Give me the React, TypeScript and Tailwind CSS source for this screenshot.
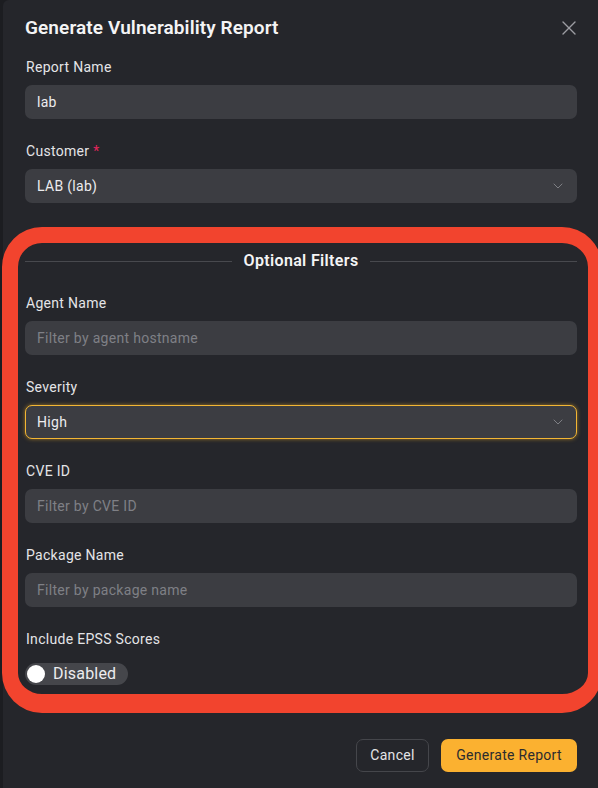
import { ChevronDown, X } from 'lucide-react';

const font = "font-['Roboto','Liberation_Sans',sans-serif]";

function Label({ text, required }: { text: string; required?: boolean }) {
  return (
    <div className="h-5 pl-[1px] text-[14px] leading-5 tracking-[0.3px] text-[#e4e4e7]">
      {text}
      {required && <span className="ml-1 text-[#e2255c]">*</span>}
    </div>
  );
}

function TextInput({ value, placeholder }: { value?: string; placeholder?: string }) {
  return (
    <div className="mt-2 flex h-[34px] items-center rounded-[7px] bg-[#3c3d42] px-3 text-[14px] tracking-[0.3px]">
      {value ? (
        <span className="text-[#ececef]">{value}</span>
      ) : (
        <span className="text-[#7f8086]">{placeholder}</span>
      )}
    </div>
  );
}

function Select({ value, focused }: { value: string; focused?: boolean }) {
  return (
    <div
      className={
        focused
          ? 'mt-2 flex h-[34px] items-center justify-between rounded-[7px] border border-[#f2b634] bg-[#3c3d42] pl-[11px] pr-[10px] text-[14px] tracking-[0.3px] shadow-[0_0_4px_rgba(250,180,40,0.55)]'
          : 'mt-2 flex h-[34px] items-center justify-between rounded-[7px] bg-[#3c3d42] pl-3 pr-[11px] text-[14px] tracking-[0.3px]'
      }
    >
      <span className="text-[#ececef]">{value}</span>
      <ChevronDown size={16} strokeWidth={1.25} className="text-[#8c8d92]" />
    </div>
  );
}

export default function App() {
  return (
    <div className={`relative h-[788px] w-[598px] overflow-hidden bg-[#1c1d21] ${font}`}>
      <div className="ml-[3px] h-full rounded-tl-[6px] bg-[#25262b] pl-[22px] pr-[21px] pt-[14px]">
        <div className="flex h-7 items-center justify-between">
          <h2 className="text-[19px] font-semibold tracking-[0.1px] text-[#f4f4f5]">Generate Vulnerability Report</h2>
          <X size={24} strokeWidth={1.4} className="mr-[-4px] text-[#9c9da2]" />
        </div>

        <div className="mt-[15px]">
          <Label text="Report Name" />
          <TextInput value="lab" />
        </div>
        <div className="mt-[22px]">
          <Label text="Customer" required />
          <Select value="LAB (lab)" />
        </div>

        <div className="mt-[47px] flex h-[22px] items-center gap-3">
          <div className="h-px flex-1 bg-[#48494e]" />
          <span className="text-[16px] font-semibold tracking-[0.35px] text-[#f4f4f5]">Optional Filters</span>
          <div className="h-px flex-1 bg-[#48494e]" />
        </div>

        <div className="mt-[21px]">
          <Label text="Agent Name" />
          <TextInput placeholder="Filter by agent hostname" />
        </div>
        <div className="mt-[22px]">
          <Label text="Severity" />
          <Select value="High" focused />
        </div>
        <div className="mt-[22px]">
          <Label text="CVE ID" />
          <TextInput placeholder="Filter by CVE ID" />
        </div>
        <div className="mt-[22px]">
          <Label text="Package Name" />
          <TextInput placeholder="Filter by package name" />
        </div>
        <div className="mt-[22px]">
          <Label text="Include EPSS Scores" />
          <div className="mt-[14px] flex h-[22px] w-[103px] items-center gap-[8px] rounded-full bg-[#45464b] pl-[2px]">
            <div className="h-[18px] w-[18px] rounded-full bg-white" />
            <span className="text-[16px] tracking-[0.2px] text-[#ececef]">Disabled</span>
          </div>
        </div>

        <div className="mt-[54px] flex justify-end gap-3">
          <button className="h-[33px] w-[73px] rounded-[7px] border border-[#45464b] text-[14px] tracking-[0.3px] text-[#e4e4e7]">
            Cancel
          </button>
          <button className="h-[33px] w-[136px] rounded-[7px] bg-[#fbb130] text-[14px] tracking-[0.3px] text-[#2b2b2e]">
            Generate Report
          </button>
        </div>
      </div>

      <div className="pointer-events-none absolute left-[2px] top-[227px] h-[486px] w-[600px] rounded-[40px] border-b-[19px] border-l-[16px] border-r-[14px] border-t-[16px] border-[#f2442e]" />
    </div>
  );
}
